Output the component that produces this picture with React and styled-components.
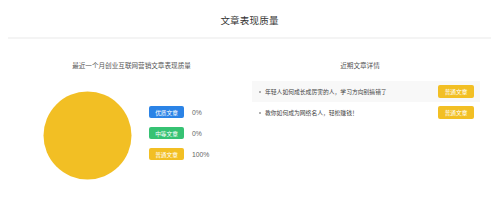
import styled, { createGlobalStyle } from 'styled-components';

const Global = createGlobalStyle`
  html, body {
    margin: 0;
    padding: 0;
    background: #fff;
  }
  body {
    font-family: "Noto Sans CJK SC", "Noto Sans", sans-serif;
  }
`;

const legend = [
  { label: '优质文章', value: '0%', color: '#2b83e6' },
  { label: '中等文章', value: '0%', color: '#36c273' },
  { label: '普通文章', value: '100%', color: '#f2bf24' },
];

const articles = [
  '年轻人如何成长成厉害的人，学习方向别搞错了',
  '教你如何成为网络名人，轻松赚钱！',
];

function App() {
  return (
    <Page>
      <Global />
      <Header>
        <h1>文章表现质量</h1>
      </Header>
      <Columns>
        <LeftPanel>
          <SubTitle>最近一个月创业互联网营销文章表现质量</SubTitle>
          <ChartRow>
            <Pie viewBox="0 0 90 90">
              <circle cx="45" cy="45" r="44.5" fill="#f2bf24" />
            </Pie>
            <Legend>
              {legend.map((item) => (
                <LegendItem key={item.label}>
                  <Tag $color={item.color}>{item.label}</Tag>
                  <Percent>{item.value}</Percent>
                </LegendItem>
              ))}
            </Legend>
          </ChartRow>
        </LeftPanel>
        <RightPanel>
          <SubTitle $shift={12}>近期文章详情</SubTitle>
          <List>
            {articles.map((text, i) => (
              <Row key={text} $shaded={i === 0}>
                <Bullet />
                <RowText>{text}</RowText>
                <Tag $color="#f2bf24" $wide>普通文章</Tag>
              </Row>
            ))}
          </List>
        </RightPanel>
      </Columns>
    </Page>
  );
}

const Page = styled.div`
  width: 499px;
  height: 220px;
  overflow: hidden;
`;

const Header = styled.div`
  height: 39px;
  margin: 0 8px;
  border-bottom: 2px solid #f4f4f4;
  display: flex;
  align-items: center;
  justify-content: center;
  padding-top: 2px;
  box-sizing: border-box;

  h1 {
    margin: 0;
    font-size: 9.5px;
    font-weight: 400;
    color: #333;
    letter-spacing: 0.2px;
  }
`;

const Columns = styled.div`
  display: flex;
`;

const LeftPanel = styled.div`
  width: 235px;
  padding-left: 14px;
  display: flex;
  flex-direction: column;
  align-items: center;
`;

const RightPanel = styled.div`
  flex: 1;
  padding: 0 19px 0 3px;
  display: flex;
  flex-direction: column;
`;

const SubTitle = styled.div`
  font-size: 6.6px;
  color: #555;
  text-align: center;
  margin-top: 22px;
  line-height: 9px;
  padding-right: ${(p) => p.$shift || 0}px;
`;

const ChartRow = styled.div`
  display: flex;
  align-items: center;
  align-self: flex-start;
  margin-top: 21px;
  padding-left: 29px;
`;

const Pie = styled.svg`
  width: 89px;
  height: 89px;
  display: block;
`;

const Legend = styled.div`
  display: flex;
  flex-direction: column;
  gap: 9px;
  margin-left: 17px;
  margin-top: -5px;
`;

const LegendItem = styled.div`
  display: flex;
  align-items: center;
  gap: 8px;
`;

const Tag = styled.span`
  display: inline-flex;
  align-items: center;
  justify-content: center;
  width: ${(p) => (p.$wide ? '36px' : '35px')};
  height: ${(p) => (p.$wide ? '13px' : '12px')};
  border-radius: 2px;
  background: ${(p) => p.$color};
  color: #fff;
  font-size: 5.7px;
  flex-shrink: 0;
`;

const Percent = styled.span`
  font-family: "Liberation Sans", "Noto Sans", sans-serif;
  font-size: 6.8px;
  color: #666;
`;

const List = styled.div`
  margin-top: 11px;
  display: flex;
  flex-direction: column;
`;

const Row = styled.div`
  display: flex;
  align-items: center;
  height: 21px;
  padding: 0 6px 0 7px;
  background: ${(p) => (p.$shaded ? '#f8f8f8' : 'transparent')};
`;

const Bullet = styled.span`
  width: 2px;
  height: 2px;
  border-radius: 50%;
  background: #999;
  margin-right: 4px;
`;

const RowText = styled.span`
  flex: 1;
  font-size: 5.8px;
  color: #444;
`;

export default App;
